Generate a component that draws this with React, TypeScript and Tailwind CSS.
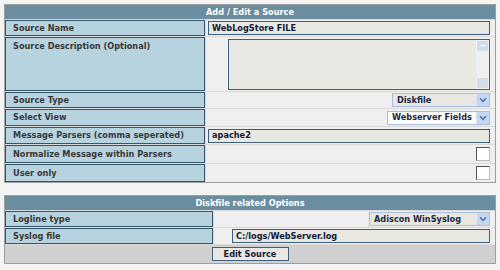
import React from 'react';

const font = "font-['DejaVu_Sans',Verdana,sans-serif]";

function Label({ children, top }: { children: React.ReactNode; top?: boolean }) {
  return (
    <div
      className={`bg-[#b8d3e0] border border-[#36586a] px-[7px] text-[8.2px] font-bold text-[#383838] flex ${
        top ? 'items-start pt-[2px]' : 'items-center'
      }`}
    >
      {children}
    </div>
  );
}

function Chevron() {
  return (
    <div className="w-[13px] h-full bg-[#c7d6f1] border-l border-[#dde6f5] flex items-center justify-center">
      <svg width="8" height="6" viewBox="0 0 8 6">
        <path d="M1 1.2 L4 4.4 L7 1.2" fill="none" stroke="#4d6ea8" strokeWidth="1.5" />
      </svg>
    </div>
  );
}

function Select({ value, white }: { value: string; white?: boolean }) {
  return (
    <div
      className={`h-[14px] flex items-stretch border border-[#a9bedc] ${white ? 'bg-[#fbfbfb]' : 'bg-[#e8e7e2]'}`}
    >
      <span className="flex-1 flex items-center pl-[4px] pr-[4px] text-[8.2px] font-bold text-[#1e2a44] whitespace-nowrap">
        {value}
      </span>
      <Chevron />
    </div>
  );
}

function Check() {
  return (
    <div className="w-[14px] h-[14px] bg-white border border-t-[#555] border-l-[#555] border-r-[#bbb] border-b-[#bbb]" />
  );
}

function Field({ value, className = '' }: { value: string; className?: string }) {
  return (
    <div
      className={`h-[14px] bg-[#e9e8e3] border border-[#3d5f80] flex items-center pl-[3px] text-[8.2px] font-bold text-[#141a33] ${className}`}
    >
      {value}
    </div>
  );
}

function Value({ children, right }: { children?: React.ReactNode; right?: boolean }) {
  return (
    <div className={`bg-[#efefef] flex items-center pl-[2px] pr-[5px] ${right ? 'justify-end' : ''}`}>
      {children}
    </div>
  );
}

export default function App() {
  return (
    <div className={`w-[500px] h-[270px] bg-[#f4f4f4] pt-[4px] pl-[4px] ${font}`}>
      <div className="w-[492px] border border-[#9e9e9e] bg-[#d9d9d9] flex flex-col gap-[1px]">
        <div className="h-[14px] bg-[#6a8d9f] text-white text-[8.2px] font-bold flex items-center justify-center">
          Add / Edit a Source
        </div>
        <div className="grid grid-cols-[200px_1fr] gap-x-[1px] h-[16px]">
          <Label>Source Name</Label>
          <Value>
            <Field value="WebLogStore FILE" className="w-full" />
          </Value>
        </div>
        <div className="grid grid-cols-[200px_1fr] gap-x-[1px] h-[54px]">
          <Label top>Source Description (Optional)</Label>
          <Value right>
            <div className="w-[262px] h-[51px] bg-[#e9e8e3] border border-[#3d5f80] flex justify-end">
              <div className="w-[13px] h-full bg-[#efefef] flex flex-col justify-between">
                <div className="h-[12px] bg-[#d3dde6] border border-[#eef2f6] flex items-center justify-center">
                  <div className="w-[5px] h-px bg-white" />
                </div>
                <div className="h-[12px] bg-[#d3dde6] border border-[#eef2f6]" />
              </div>
            </div>
          </Value>
        </div>
        <div className="grid grid-cols-[200px_1fr] gap-x-[1px] h-[16px]">
          <Label>Source Type</Label>
          <Value right>
            <div className="w-[98px]">
              <Select value="Diskfile" />
            </div>
          </Value>
        </div>
        <div className="grid grid-cols-[200px_1fr] gap-x-[1px] h-[17px]">
          <Label>Select View</Label>
          <Value right>
            <div className="w-[103px]">
              <Select value="Webserver Fields" white />
            </div>
          </Value>
        </div>
        <div className="grid grid-cols-[200px_1fr] gap-x-[1px] h-[17px]">
          <Label>Message Parsers (comma seperated)</Label>
          <Value>
            <Field value="apache2" className="w-full" />
          </Value>
        </div>
        <div className="grid grid-cols-[200px_1fr] gap-x-[1px] h-[18px]">
          <Label>Normalize Message within Parsers</Label>
          <Value right>
            <Check />
          </Value>
        </div>
        <div className="grid grid-cols-[200px_1fr] gap-x-[1px] h-[18px]">
          <Label>User only</Label>
          <Value right>
            <Check />
          </Value>
        </div>
      </div>

      <div className="w-[492px] mt-[12px] border border-[#9e9e9e] bg-[#d9d9d9] flex flex-col gap-[1px]">
        <div className="h-[14px] bg-[#6a8d9f] text-white text-[8.2px] font-bold flex items-center justify-center">
          Diskfile related Options
        </div>
        <div className="grid grid-cols-[208px_1fr] gap-x-[1px] h-[16px]">
          <Label>Logline type</Label>
          <Value right>
            <div className="w-[121px]">
              <Select value="Adiscon WinSyslog" />
            </div>
          </Value>
        </div>
        <div className="grid grid-cols-[208px_1fr] gap-x-[1px] h-[16px]">
          <Label>Syslog file</Label>
          <Value right>
            <Field value="C:/logs/WebServer.log" className="w-[258px]" />
          </Value>
        </div>
        <div className="h-[18px] bg-[#d0d0d0] flex items-center justify-center">
          <button className="w-[77px] h-[14px] bg-[#e9e8e3] border border-[#3d5f80] text-[8.2px] font-bold text-[#141a33] flex items-center justify-center">
            Edit Source
          </button>
        </div>
      </div>
    </div>
  );
}
